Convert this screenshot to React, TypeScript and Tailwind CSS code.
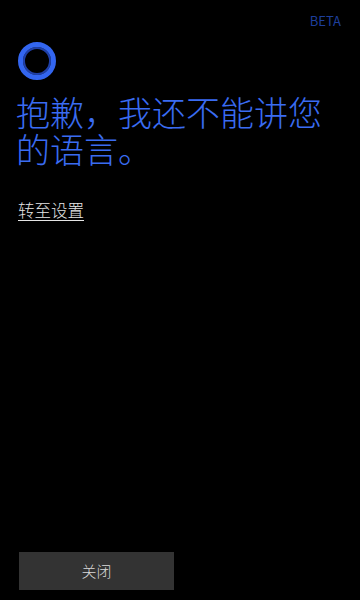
export default function App() {
  return (
    <div
      className="flex h-[600px] w-[360px] flex-col bg-black"
      style={{ fontFamily: '"Noto Sans CJK SC", "Noto Sans", sans-serif' }}
    >
      <div className="flex justify-end pr-[19px] pt-[12px]">
        <span className="text-[13px] leading-[18px] text-[#1e3f9c]">BETA</span>
      </div>
      <div className="ml-[18px] mt-[12px] h-[38px] w-[38px] rounded-full border-[5px] border-[#3366f0] shadow-[inset_0_0_0_2px_#1f3fa8]" />
      <h1 className="mt-[13px] pl-[16px] pr-[8px] text-[34px] font-light leading-[37px] text-[#3a6cf2]">
        抱歉，我还不能讲您的语言。
      </h1>
      <div className="mt-[31px] pl-[18px]">
        <span className="text-[16.5px] font-light leading-[22px] text-[#e6e6e6] underline underline-offset-[3px]">
          转至设置
        </span>
      </div>
      <div className="flex-1" />
      <div className="mb-[10px] ml-[19px] flex h-[38px] w-[155px] items-center justify-center bg-[#333333]">
        <span className="text-[15px] font-light text-[#d9d9d9]">关闭</span>
      </div>
    </div>
  );
}
